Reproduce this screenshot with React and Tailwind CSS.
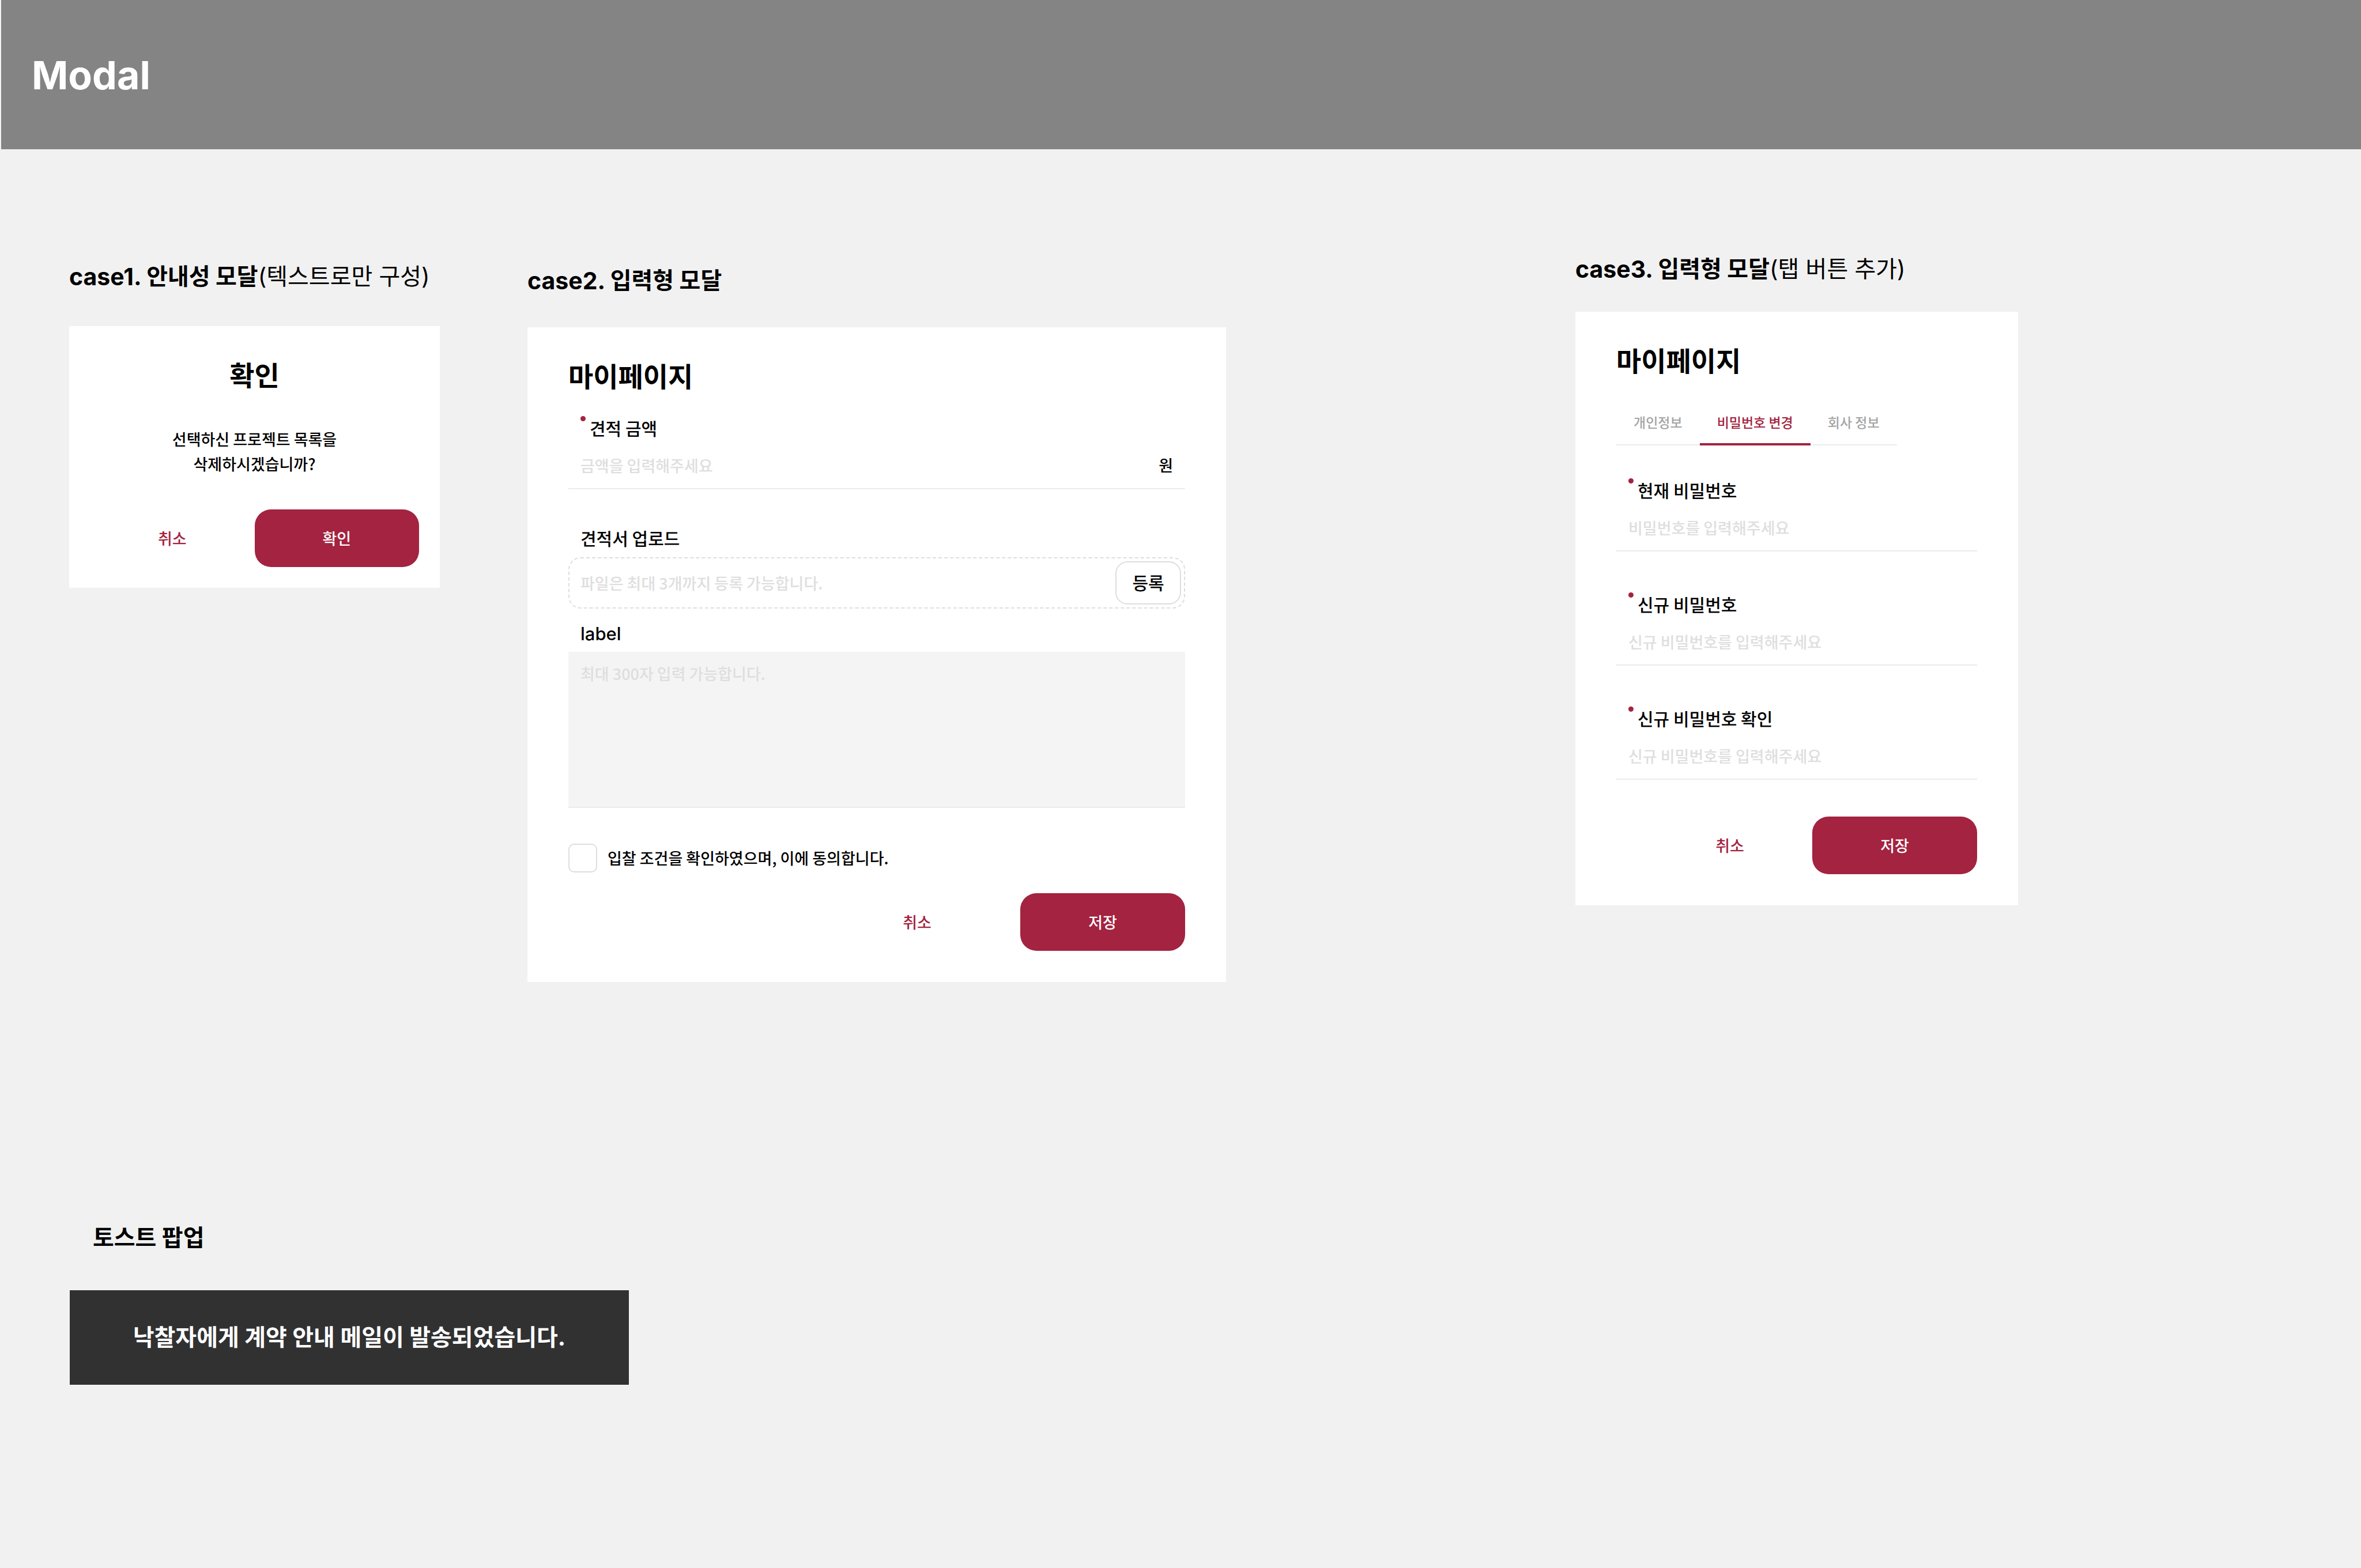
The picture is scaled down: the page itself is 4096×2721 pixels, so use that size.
import React, { useState } from "react";

function CaseTitle({ name, note, className = "" }) {
  return (
    <h2 className={`flex items-center whitespace-pre font-['Inter','Noto_Sans_CJK_KR',sans-serif] text-[40px] leading-[60px] font-bold ${className}`}>
      <span className="text-[41px]">{name.latin} </span>
      <span>{name.hangul}</span>
      {note && <span className="font-normal">{note}</span>}
    </h2>
  );
}

function ModalTitle({ id, children, className = "" }) {
  return (
    <h3 id={id} className={`font-['Inter','Noto_Sans_CJK_KR',sans-serif] text-[47px] leading-[70px] font-bold ${className}`}>
      {children}
    </h3>
  );
}

function FieldLabel({ htmlFor, required, children, className = "pb-[4px] text-[30px] leading-[41px]" }) {
  return (
    <label htmlFor={htmlFor} className={`flex items-start gap-[7px] px-[21px] ${className}`}>
      {required && <span aria-hidden="true" className="size-[9px] shrink-0 rounded-full bg-[#a32340]" />}
      <span>{children}</span>
    </label>
  );
}

function LineField({ id, label, placeholder, type = "text", unit }) {
  return (
    <div>
      <FieldLabel htmlFor={id} required>
        {label}
      </FieldLabel>
      <div className="flex h-[82px] items-center border-b-2 border-[#ebebeb] px-[21px] text-[27px]">
        <input
          id={id}
          type={type}
          placeholder={placeholder}
          className="h-full min-w-0 flex-1 bg-transparent outline-none placeholder:text-[#dedede]"
        />
        {unit && <span>{unit}</span>}
      </div>
    </div>
  );
}

function Actions({ cancel, confirm, className = "" }) {
  return (
    <div className={`flex justify-end ${className}`}>
      <button type="button" className="h-[100px] w-[286px] rounded-[28px] text-[27px] text-[#a32340]">
        {cancel}
      </button>
      <button type="button" className="h-[100px] w-[286px] rounded-[28px] bg-[#a32340] text-[27px] text-white">
        {confirm}
      </button>
    </div>
  );
}

const TABS = ["개인정보", "비밀번호 변경", "회사 정보"];

function Tabs() {
  const [active, setActive] = useState(1);
  return (
    <div role="tablist" className="mt-[33px] flex text-[23px]">
      {TABS.map((tab, i) => (
        <button
          key={tab}
          type="button"
          role="tab"
          aria-selected={i === active}
          onClick={() => setActive(i)}
          className={
            i === active
              ? "h-[78px] px-[30px] pb-[3px] text-[#a32340] shadow-[inset_0_-4px_0_#a32340]"
              : "h-[78px] px-[30px] pb-[3px] text-[#a4a4a4] shadow-[inset_0_-2px_0_#ebebeb]"
          }
        >
          {tab}
        </button>
      ))}
    </div>
  );
}

function ConfirmModal() {
  return (
    <div role="dialog" aria-labelledby="confirm-title" className="bg-white px-[36px] pt-[51px] pb-[36px]">
      <ModalTitle id="confirm-title" className="text-center">확인</ModalTitle>
      <p className="mt-[53px] text-center text-[27px] leading-[43px]">
        선택하신 프로젝트 목록을
        <br />
        삭제하시겠습니까?
      </p>
      <Actions cancel="취소" confirm="확인" className="mt-[58px]" />
    </div>
  );
}

function EstimateModal() {
  return (
    <form role="dialog" aria-labelledby="estimate-title" className="bg-white px-[71px] pt-[51px] pb-[54px]">
      <ModalTitle id="estimate-title" className="mb-[33px]">마이페이지</ModalTitle>
      <LineField id="amount" label="견적 금액" placeholder="금액을 입력해주세요" unit="원" />

      <div className="mt-[64px]">
        <FieldLabel htmlFor="upload">견적서 업로드</FieldLabel>
        <div className="mt-[9px] flex h-[89px] items-center rounded-[21px] border-2 border-dashed border-[#dedede] pr-[5px] pl-[19px]">
          <input
            id="upload"
            readOnly
            placeholder="파일은 최대 3개까지 등록 가능합니다."
            className="h-full min-w-0 flex-1 bg-transparent text-[27px] outline-none placeholder:text-[#dedede]"
          />
          <button type="button" className="h-[75px] w-[114px] rounded-[21px] border-2 border-[#dedede] bg-white pb-[3px] text-[30px]">
            등록
          </button>
        </div>
      </div>

      <div className="mt-[21px]">
        <FieldLabel htmlFor="memo" className="font-['Inter',sans-serif] text-[31px] leading-[45px]">label</FieldLabel>
        <textarea
          id="memo"
          placeholder="최대 300자 입력 가능합니다."
          className="mt-[9px] block h-[271px] w-full resize-none border-b-2 border-[#ebebeb] bg-[#f4f4f4] px-[21px] py-[18px] text-[27px] leading-[40px] outline-none placeholder:text-[#dedede]"
        />
      </div>

      <div className="mt-[62px] flex items-center gap-[18px]">
        <input
          id="agree"
          type="checkbox"
          className="size-[50px] shrink-0 appearance-none rounded-[10px] border-2 border-[#dedede] bg-white checked:bg-[#a32340]"
        />
        <label htmlFor="agree" className="text-[27px] leading-[40px]">
          입찰 조건을 확인하였으며, 이에 동의합니다.
        </label>
      </div>

      <Actions cancel="취소" confirm="저장" className="mt-[36px] gap-[36px]" />
    </form>
  );
}

function PasswordModal() {
  return (
    <form role="dialog" aria-labelledby="password-title" className="bg-white px-[71px] pt-[51px] pb-[54px]">
      <ModalTitle id="password-title">마이페이지</ModalTitle>
      <Tabs />
      <div className="mt-[57px] flex flex-col gap-[71px]">
        <LineField id="current" type="password" label="현재 비밀번호" placeholder="비밀번호를 입력해주세요" />
        <LineField id="next" type="password" label="신규 비밀번호" placeholder="신규 비밀번호를 입력해주세요" />
        <LineField id="repeat" type="password" label="신규 비밀번호 확인" placeholder="신규 비밀번호를 입력해주세요" />
      </div>
      <Actions cancel="취소" confirm="저장" className="mt-[64px]" />
    </form>
  );
}

export default function App() {
  return (
    <div className="min-h-screen bg-[#f1f1f1] font-['Noto_Sans_CJK_KR','Inter',sans-serif] font-medium text-black">
      <header className="ml-[2px] flex h-[259px] items-center bg-[#848484] px-[53px]">
        <h1 className="font-['Inter',sans-serif] text-[68px] font-bold text-white">Modal</h1>
      </header>

      <main>
        <div className="grid grid-cols-[795fr_1818fr_1363fr] items-start pl-[120px]">
          <section className="max-w-[643px] pt-[191px]">
            <CaseTitle name={{ latin: "case1.", hangul: "안내성 모달" }} note="(텍스트로만 구성)" className="mb-[56px]" />
            <ConfirmModal />
          </section>
          <section className="max-w-[1212px] pt-[198px]">
            <CaseTitle name={{ latin: "case2.", hangul: "입력형 모달" }} className="mb-[51px]" />
            <EstimateModal />
          </section>
          <section className="max-w-[768px] pt-[178px]">
            <CaseTitle name={{ latin: "case3.", hangul: "입력형 모달" }} note="(탭 버튼 추가)" className="mb-[44px]" />
            <PasswordModal />
          </section>
        </div>

        <section className="mt-[414px] pl-[121px] font-['Inter','Noto_Sans_CJK_KR',sans-serif]">
          <h2 className="pl-[40px] text-[40px] leading-[60px] font-bold">토스트 팝업</h2>
          <div role="status" className="mt-[61px] flex h-[164px] max-w-[970px] items-center justify-center bg-[#313131] text-[40px] font-bold text-white">
            낙찰자에게 계약 안내 메일이 발송되었습니다.
          </div>
        </section>
      </main>
    </div>
  );
}
